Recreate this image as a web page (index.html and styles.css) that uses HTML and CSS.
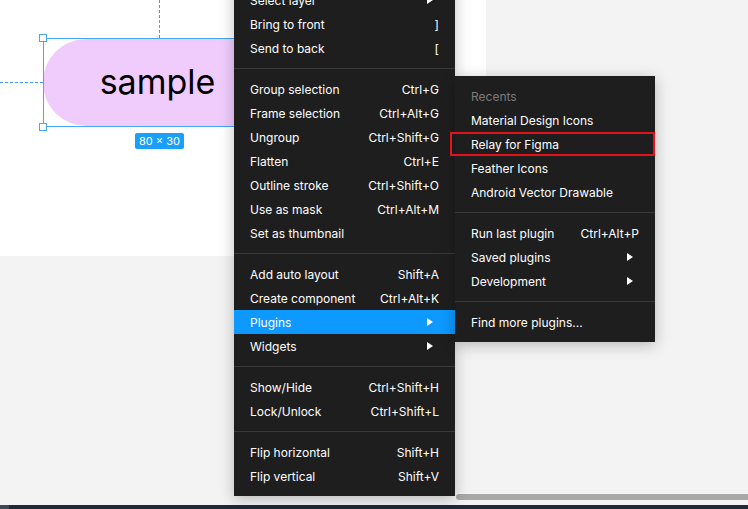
FILE: index.html
```html
<!DOCTYPE html>
<html lang="en">
<head>
  <meta charset="UTF-8" />
  <title>Canvas - context menu</title>
  <link rel="stylesheet" href="styles.css">
</head>
<body>

<div class="stage">
  <div class="frame">
    <div class="guide guide-v"></div>
    <div class="guide guide-h"></div>
    <div class="pill">sample</div>
    <div class="selection">
      <span class="handle tl"></span>
      <span class="handle bl"></span>
    </div>
    <div class="size-tag">80 × 30</div>
  </div>
  <div class="spacer"></div>
  <div class="scroll-row"><div class="scrollbar"></div></div>
  <div class="taskbar"><span class="task-start"></span></div>
</div>

<div class="menu main-menu">
  <div class="item"><span>Select layer</span><i class="arrow"></i></div>
  <div class="item"><span>Bring to front</span><span class="key">]</span></div>
  <div class="item"><span>Send to back</span><span class="key">[</span></div>
  <div class="sep"></div>
  <div class="item"><span>Group selection</span><span class="key">Ctrl+G</span></div>
  <div class="item"><span>Frame selection</span><span class="key">Ctrl+Alt+G</span></div>
  <div class="item"><span>Ungroup</span><span class="key">Ctrl+Shift+G</span></div>
  <div class="item"><span>Flatten</span><span class="key">Ctrl+E</span></div>
  <div class="item"><span>Outline stroke</span><span class="key">Ctrl+Shift+O</span></div>
  <div class="item"><span>Use as mask</span><span class="key">Ctrl+Alt+M</span></div>
  <div class="item"><span>Set as thumbnail</span></div>
  <div class="sep"></div>
  <div class="item"><span>Add auto layout</span><span class="key">Shift+A</span></div>
  <div class="item"><span>Create component</span><span class="key">Ctrl+Alt+K</span></div>
  <div class="item active"><span>Plugins</span><i class="arrow"></i></div>
  <div class="item"><span>Widgets</span><i class="arrow"></i></div>
  <div class="sep"></div>
  <div class="item"><span>Show/Hide</span><span class="key">Ctrl+Shift+H</span></div>
  <div class="item"><span>Lock/Unlock</span><span class="key">Ctrl+Shift+L</span></div>
  <div class="sep"></div>
  <div class="item"><span>Flip horizontal</span><span class="key">Shift+H</span></div>
  <div class="item"><span>Flip vertical</span><span class="key">Shift+V</span></div>
</div>

<div class="menu sub-menu">
  <div class="item label"><span>Recents</span></div>
  <div class="item"><span>Material Design Icons</span></div>
  <div class="item marked"><span>Relay for Figma</span></div>
  <div class="item"><span>Feather Icons</span></div>
  <div class="item"><span>Android Vector Drawable</span></div>
  <div class="sep"></div>
  <div class="item"><span>Run last plugin</span><span class="key">Ctrl+Alt+P</span></div>
  <div class="item"><span>Saved plugins</span><i class="arrow"></i></div>
  <div class="item"><span>Development</span><i class="arrow"></i></div>
  <div class="sep"></div>
  <div class="item"><span>Find more plugins...</span></div>
</div>

</body>
</html>
```

FILE: styles.css
```css
* { margin: 0; padding: 0; box-sizing: border-box; }
body {
  font-family: Inter, 'Noto Sans', sans-serif;
  background: #f3f3f3;
  width: 748px;
  height: 509px;
  overflow: hidden;
  position: relative;
}
.stage {
  display: flex;
  flex-direction: column;
  height: 509px;
}
.frame {
  position: relative;
  width: 486px;
  height: 256px;
  background: #fff;
  flex-shrink: 0;
}
.guide { position: absolute; }
.guide-v {
  left: 159px;
  top: 0;
  height: 38px;
  border-left: 1px dashed #3d9df3;
}
.guide-h {
  left: 0;
  top: 82px;
  width: 43px;
  border-top: 1px dashed #3d9df3;
}
.pill {
  position: absolute;
  left: 43px;
  top: 39px;
  width: 232px;
  height: 87px;
  border-radius: 44px;
  background: #f0ccfd;
  display: flex;
  align-items: center;
  justify-content: center;
  font-size: 34px;
  color: #000;
  padding: 0 3px 2px 0;
}
.selection {
  position: absolute;
  left: 43px;
  top: 38px;
  width: 232px;
  height: 89px;
  border: 1px solid #47a6f6;
}
.handle {
  position: absolute;
  width: 8px;
  height: 8px;
  background: #fff;
  border: 1px solid #47a6f6;
}
.handle.tl { left: -5px; top: -5px; }
.handle.bl { left: -5px; bottom: -5px; }
.size-tag {
  position: absolute;
  left: 135px;
  top: 133px;
  height: 16px;
  padding: 0 4px;
  border-radius: 2px;
  background: #18a0fb;
  color: #fff;
  font-size: 11px;
  line-height: 16px;
}
.spacer { flex: 1; }
.scroll-row {
  height: 6px;
  padding-left: 456px;
  margin-bottom: 5px;
}
.scrollbar {
  height: 6px;
  background: #a9a9a9;
  border-radius: 3px 0 0 3px;
}
.taskbar {
  height: 4px;
  background: #1d2a37;
  display: flex;
}
.task-start {
  width: 9px;
  background: #3b4956;
}

.menu {
  position: absolute;
  background: #1e1e1e;
  color: #fff;
  font-size: 12px;
  padding: 8px 0;
  box-shadow: 0 3px 14px rgba(0,0,0,0.25);
}
.main-menu {
  left: 234px;
  top: -20px;
  width: 221px;
}
.sub-menu {
  left: 455px;
  top: 76px;
  width: 200px;
}
.item {
  position: relative;
  height: 24px;
  padding: 0 16px;
  display: flex;
  align-items: center;
  justify-content: space-between;
  white-space: nowrap;
}
.item.active { background: #0d99ff; }
.item.label { color: #7b7b7b; }
.item.marked::after {
  content: '';
  position: absolute;
  left: -5px;
  right: 0;
  top: 0;
  bottom: 0;
  border: 2px solid #e3131b;
}
.arrow {
  width: 0;
  height: 0;
  margin-right: 6px;
  border-left: 6px solid #fff;
  border-top: 4px solid transparent;
  border-bottom: 4px solid transparent;
}
.sep {
  height: 1px;
  margin: 8px 0;
  background: #393939;
}
```
